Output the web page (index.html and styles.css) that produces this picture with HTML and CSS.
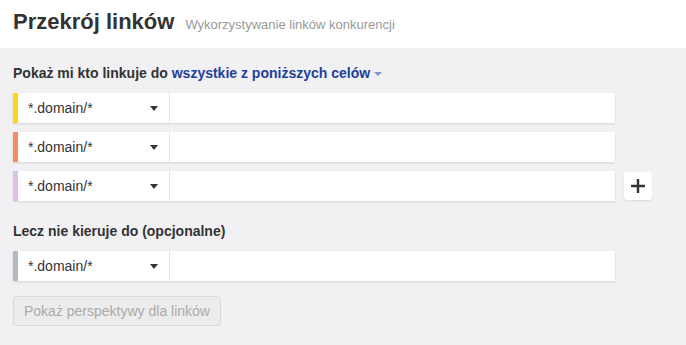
FILE: index.html
```html
<!DOCTYPE html>
<html lang="pl">
<head>
    <meta charset="UTF-8">
    <title>Przekrój linków</title>
    <link rel="stylesheet" href="styles.css">
</head>
<body>
    <div class="header">
        <h1>Przekrój linków</h1>
        <span class="subtitle">Wykorzystywanie linków konkurencji</span>
    </div>
    <div class="content">
        <div class="label">Pokaż mi kto linkuje do <a href="#" class="mode">wszystkie z poniższych celów</a><span class="caret"></span></div>
        <div class="targets">
            <div class="target-row">
                <div class="target yellow">
                    <div class="select">*.domain/*<span class="arrow"></span></div>
                    <input type="text">
                </div>
            </div>
            <div class="target-row">
                <div class="target orange">
                    <div class="select">*.domain/*<span class="arrow"></span></div>
                    <input type="text">
                </div>
            </div>
            <div class="target-row">
                <div class="target lilac">
                    <div class="select">*.domain/*<span class="arrow"></span></div>
                    <input type="text">
                </div>
                <button class="add">
                    <svg width="14" height="14" viewBox="0 0 14 14"><path d="M7 0v14M0 7h14" stroke="#333" stroke-width="2.4"/></svg>
                </button>
            </div>
        </div>
        <div class="label second">Lecz nie kieruje do (opcjonalne)</div>
        <div class="targets">
            <div class="target-row">
                <div class="target grey">
                    <div class="select">*.domain/*<span class="arrow"></span></div>
                    <input type="text">
                </div>
            </div>
        </div>
        <button class="submit" disabled>Pokaż perspektywy dla linków</button>
    </div>
</body>
</html>
```
FILE: styles.css
```css
body {
    margin: 0;
    font-family: "Liberation Sans", Arial, sans-serif;
    background-color: #f1f1f3;
    color: #333;
}
.header {
    background: #fff;
    height: 48px;
    padding: 0 13px;
    display: flex;
    align-items: baseline;
    gap: 11px;
}
.header h1 {
    margin: 0;
    font-size: 22px;
    line-height: 44px;
    font-weight: bold;
    color: #333;
}
.subtitle {
    font-size: 13px;
    color: #999;
}
.content {
    padding: 13px 13px 0;
}
.label {
    font-size: 14px;
    font-weight: bold;
    color: #333;
    line-height: 16px;
    margin: 4px 0 12px;
}
.label.second {
    margin: 22px 0 12px;
}
.mode {
    color: #22409a;
    text-decoration: none;
}
.caret {
    display: inline-block;
    margin-left: 4px;
    border-left: 4px solid transparent;
    border-right: 4px solid transparent;
    border-top: 4px solid #7c99c9;
    vertical-align: 2px;
}
.targets {
    display: flex;
    flex-direction: column;
    gap: 9px;
}
.target-row {
    display: flex;
    align-items: center;
    gap: 9px;
}
.target {
    width: 602px;
    height: 30px;
    box-sizing: border-box;
    display: flex;
    background: #fff;
    border-left: 5px solid;
    box-shadow: 0 1px 2px rgba(0, 0, 0, 0.12);
}
.target.yellow { border-left-color: #f9d71c; }
.target.orange { border-left-color: #f78b66; }
.target.lilac { border-left-color: #dcc0e8; }
.target.grey { border-left-color: #b3bac2; }
.select {
    width: 152px;
    flex: none;
    box-sizing: border-box;
    padding: 0 11px 0 10px;
    display: flex;
    align-items: center;
    justify-content: space-between;
    font-size: 14px;
    color: #333;
    border-right: 1px solid #e2e2e2;
}
.arrow {
    border-left: 4px solid transparent;
    border-right: 4px solid transparent;
    border-top: 5px solid #333;
}
.target input {
    flex: 1;
    border: none;
    outline: none;
    background: transparent;
}
.add {
    width: 28px;
    height: 28px;
    padding: 0;
    border: none;
    border-radius: 3px;
    background: #fff;
    box-shadow: 0 1px 2px rgba(0, 0, 0, 0.1);
    display: flex;
    align-items: center;
    justify-content: center;
}
.submit {
    margin-top: 15px;
    height: 30px;
    padding: 0 10px;
    font-family: "Liberation Sans", Arial, sans-serif;
    font-size: 14px;
    color: #aaa;
    background: #ececec;
    border: 1px solid #dadada;
    border-radius: 3px;
}
```
